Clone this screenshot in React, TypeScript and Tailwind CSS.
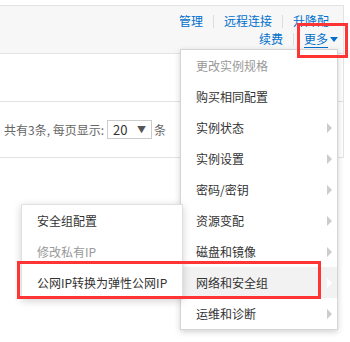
import React from 'react';

const font = { fontFamily: '"Noto Sans CJK SC", "Liberation Sans", sans-serif' };

interface MenuItem {
  label: string;
  disabled?: boolean;
  sub?: boolean;
  active?: boolean;
}

const mainItems: MenuItem[] = [
  { label: '更改实例规格', disabled: true },
  { label: '购买相同配置' },
  { label: '实例状态', sub: true },
  { label: '实例设置', sub: true },
  { label: '密码/密钥', sub: true },
  { label: '资源变配', sub: true },
  { label: '磁盘和镜像', sub: true },
  { label: '网络和安全组', sub: true, active: true },
  { label: '运维和诊断', sub: true },
];

const subItems: MenuItem[] = [
  { label: '安全组配置' },
  { label: '修改私有IP', disabled: true },
  { label: '公网IP转换为弹性公网IP' },
];

function Sep() {
  return <span className="mx-[10px] inline-block h-[13px] w-px bg-[#dddddd] align-middle" />;
}

function Arrow({ active }: { active?: boolean }) {
  return (
    <svg width="5" height="10" viewBox="0 0 5 10" className="shrink-0">
      <path d="M0 0 L5 5 L0 10 Z" fill={active ? '#ffffff' : '#cccccc'} />
    </svg>
  );
}

function MenuRow({ item }: { item: MenuItem }) {
  return (
    <div
      className={`flex h-[31px] items-center justify-between pl-[15px] pr-[5px] text-[12px] ${
        item.active ? 'bg-[#f2f2f2]' : ''
      } ${item.disabled ? 'text-[#999999]' : 'text-[#333333]'}`}
    >
      <span>{item.label}</span>
      {item.sub && <Arrow active={item.active} />}
    </div>
  );
}

export default function App() {
  return (
    <div className="relative h-[342px] w-[350px] overflow-hidden bg-white" style={font}>
      {/* table panel */}
      <div className="mt-[5px] w-[344px] border-t border-r border-[#e3e3e3]">
        <div className="h-[48px] border-b border-[#e3e3e3] bg-[#f7f7f7] pt-[6px] text-[12px] leading-[18px] text-[#0070cc]">
          <div className="flex items-center justify-end pr-[14px]">
            <span>管理</span>
            <Sep />
            <span>远程连接</span>
            <Sep />
            <span>升降配</span>
          </div>
          <div className="flex items-center justify-end pr-[5px]">
            <span>续费</span>
            <Sep />
            <span className="underline underline-offset-[3px]">更多</span>
            <svg width="8" height="5" viewBox="0 0 8 5" className="ml-[2px]">
              <path d="M0 0 L8 0 L4 5 Z" fill="#0070cc" />
            </svg>
          </div>
        </div>
        <div className="h-[48px] border-b border-[#e3e3e3]" />
        <div className="flex h-[56px] items-center border-b border-[#e3e3e3] text-[12px] text-[#666666]">
          <div className="flex w-[104px] justify-end overflow-hidden whitespace-nowrap">
            <span>共有3条, 每页显示:</span>
          </div>
          <div className="ml-[3px] flex h-[19px] w-[45px] items-center justify-between border border-[#cccccc] px-[5px] text-[13px] text-[#333333]">
            <span>20</span>
            <span className="text-[9px] text-[#555555]">▼</span>
          </div>
          <span className="ml-[2px]">条</span>
        </div>
      </div>

      {/* main dropdown */}
      <div className="absolute left-[180px] top-[49px] w-[158px] border border-[#d5d5d5] bg-white shadow-[0_2px_6px_rgba(0,0,0,0.18)]">
        {mainItems.map((it) => (
          <MenuRow key={it.label} item={it} />
        ))}
      </div>

      {/* sub menu */}
      <div className="absolute left-[21px] top-[204px] w-[162px] border border-[#e0e0e0] bg-white shadow-[0_2px_8px_rgba(0,0,0,0.18)]">
        {subItems.map((it) => (
          <div
            key={it.label}
            className={`flex h-[31px] items-center pl-[15px] text-[12px] ${
              it.disabled ? 'text-[#999999]' : 'text-[#333333]'
            }`}
          >
            {it.label}
          </div>
        ))}
      </div>

      {/* highlight boxes */}
      <div className="pointer-events-none absolute left-[297px] top-[23px] h-[35px] w-[51px] border-[3px] border-[#ff3535]" />
      <div className="pointer-events-none absolute left-[17px] top-[261px] h-[38px] w-[304px] border-[3px] border-[#ff3535]" />
    </div>
  );
}
